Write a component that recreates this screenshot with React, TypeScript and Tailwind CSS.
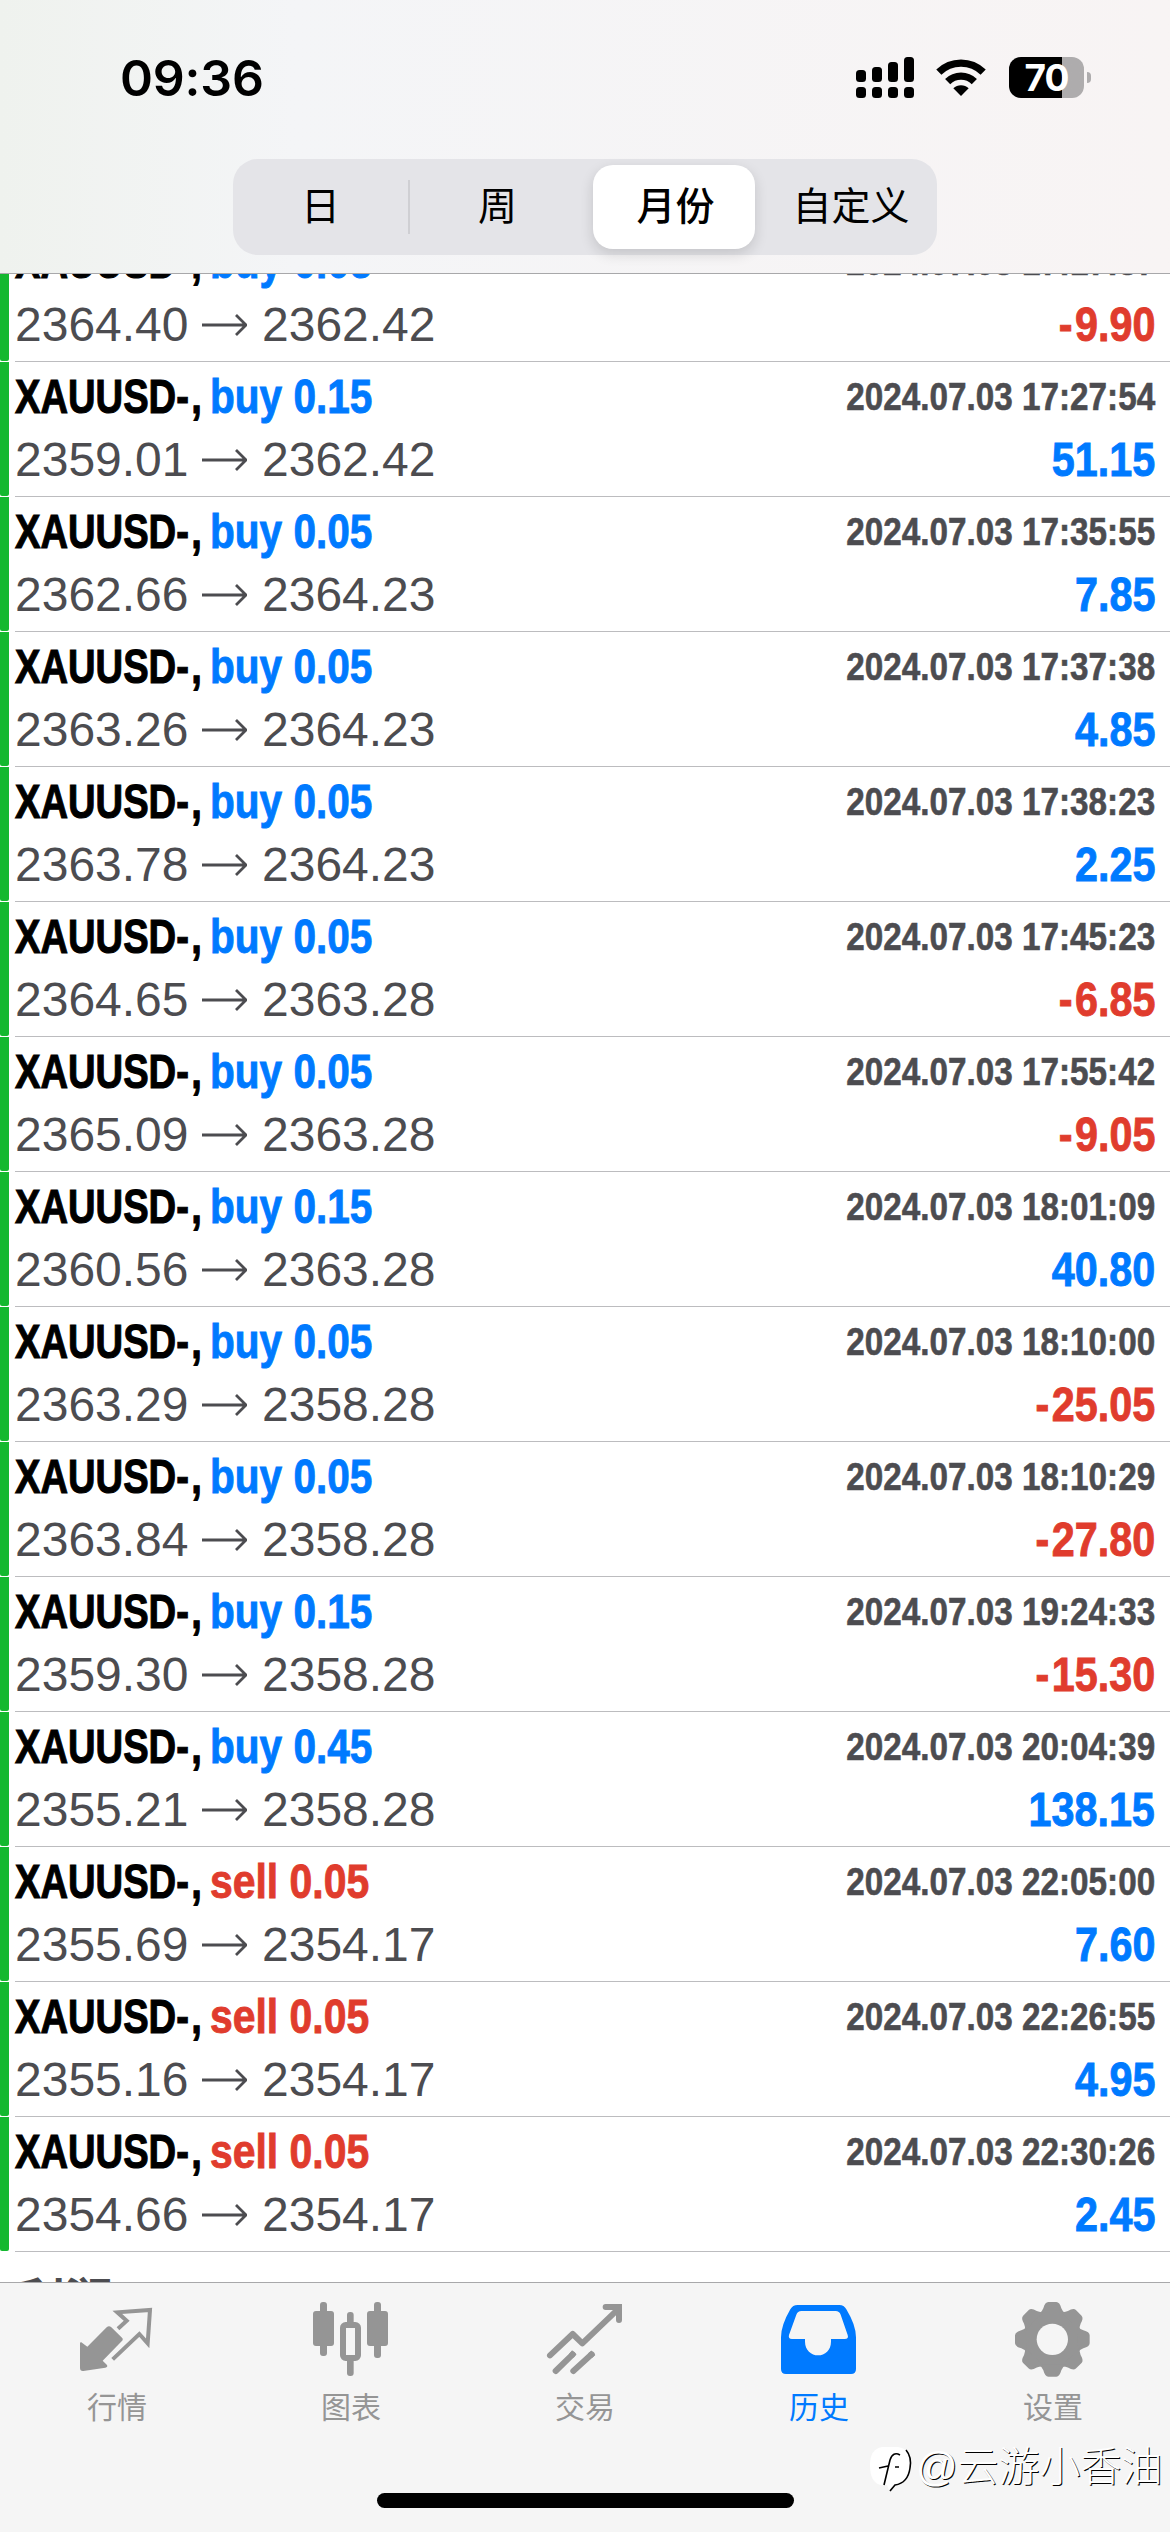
import type { ReactNode } from "react";

type Deal = {
  side: "buy" | "sell";
  volume: string;
  open: string;
  close: string;
  time: string;
  profit: string;
};

const deals: Deal[] = [
  { side: "buy", volume: "0.05", open: "2364.40", close: "2362.42", time: "17:17:37", profit: "-9.90" },
  { side: "buy", volume: "0.15", open: "2359.01", close: "2362.42", time: "17:27:54", profit: "51.15" },
  { side: "buy", volume: "0.05", open: "2362.66", close: "2364.23", time: "17:35:55", profit: "7.85" },
  { side: "buy", volume: "0.05", open: "2363.26", close: "2364.23", time: "17:37:38", profit: "4.85" },
  { side: "buy", volume: "0.05", open: "2363.78", close: "2364.23", time: "17:38:23", profit: "2.25" },
  { side: "buy", volume: "0.05", open: "2364.65", close: "2363.28", time: "17:45:23", profit: "-6.85" },
  { side: "buy", volume: "0.05", open: "2365.09", close: "2363.28", time: "17:55:42", profit: "-9.05" },
  { side: "buy", volume: "0.15", open: "2360.56", close: "2363.28", time: "18:01:09", profit: "40.80" },
  { side: "buy", volume: "0.05", open: "2363.29", close: "2358.28", time: "18:10:00", profit: "-25.05" },
  { side: "buy", volume: "0.05", open: "2363.84", close: "2358.28", time: "18:10:29", profit: "-27.80" },
  { side: "buy", volume: "0.15", open: "2359.30", close: "2358.28", time: "19:24:33", profit: "-15.30" },
  { side: "buy", volume: "0.45", open: "2355.21", close: "2358.28", time: "20:04:39", profit: "138.15" },
  { side: "sell", volume: "0.05", open: "2355.69", close: "2354.17", time: "22:05:00", profit: "7.60" },
  { side: "sell", volume: "0.05", open: "2355.16", close: "2354.17", time: "22:26:55", profit: "4.95" },
  { side: "sell", volume: "0.05", open: "2354.66", close: "2354.17", time: "22:30:26", profit: "2.45" },
];

function StatusBar() {
  return (
    <div className="flex h-[159px] items-start justify-between pl-[120px] pr-[79px]">
      <div className="mt-[48px] font-[Inter] text-[50px] leading-[60px] font-semibold tracking-[-0.2px] text-black">09:36</div>
      <div className="mt-[57px] flex items-start">
        <svg className="h-[41px] w-[58px]" viewBox="0 0 58 41">
          <rect x="0" y="13" width="10" height="12" rx="3.5" />
          <rect x="16" y="10" width="10" height="15" rx="3.5" />
          <rect x="32" y="5" width="10" height="20" rx="3.5" />
          <rect x="48" y="0" width="10" height="25" rx="3.5" />
          <rect x="0" y="30" width="10" height="11" rx="3.5" />
          <rect x="16" y="30" width="10" height="11" rx="3.5" />
          <rect x="32" y="30" width="10" height="11" rx="3.5" />
          <rect x="48" y="30" width="10" height="11" rx="3.5" />
        </svg>
        <svg className="mt-[1px] ml-[21px] h-[40px] w-[52px]" viewBox="286 54 156 120">
          <path d="M297.500 96.500A95 95 0 0 1 430.500 96.500" fill="none" stroke="#000" strokeWidth="22" />
          <path d="M324 125A57 57 0 0 1 404 125" fill="none" stroke="#000" strokeWidth="22" />
          <path d="M364 168L341 145A33 33 0 0 1 387 145Z" />
        </svg>
        <div className="ml-[22px] flex items-center">
          <div className="flex h-[41px] w-[75px] items-center justify-center rounded-[12px] bg-linear-to-r from-black from-[71%] to-[#aeacad] to-[71%] font-[Inter] text-[37px] leading-[41px] font-bold tracking-[-1px] text-white">
            70
          </div>
          <div className="ml-[3px] h-[11px] w-[4px] rounded-r-full bg-[#aeacad]" />
        </div>
      </div>
    </div>
  );
}

function Segments() {
  return (
    <div className="ml-[233px] flex h-[96px] w-[704px] items-center rounded-[25px] bg-[#e4e4e8] text-[39px] leading-[84px] text-black">
      <div className="w-[175px] text-center">日</div>
      <div className="h-[54px] w-[2px] bg-[#cfcfd3]" />
      <div className="w-[183px] pr-[8px] text-center">周</div>
      <div className="h-[84px] w-[162px] rounded-[20px] bg-white pl-[3px] text-center font-medium shadow-[0_5px_14px_rgba(0,0,0,0.14)]">月份</div>
      <div className="flex-1 pl-[10px] text-center">自定义</div>
    </div>
  );
}

function Arrow() {
  return (
    <svg className="ml-[14px] mr-[15px] h-[24px] w-[45px]" viewBox="0 0 45 24" fill="none" stroke="#4c4c50" strokeWidth="2.8">
      <path d="M0 12H44M34 2L44 12L34 22" />
    </svg>
  );
}

function DealRow({ deal }: { deal: Deal }) {
  const sideColor = deal.side === "buy" ? "text-[#007aff]" : "text-[#e03c2d]";
  const sideScale =
    deal.side === "buy"
      ? "inline-block origin-left scale-x-[0.845] [-webkit-text-stroke:0.9px_currentColor]"
      : "inline-block origin-left scale-x-[0.852] [-webkit-text-stroke:0.9px_currentColor]";
  const loss = deal.profit.startsWith("-");
  return (
    <div className="flex h-[135px] shrink-0">
      <div className="h-[134px] w-[9px] rounded-b-[2px] bg-[#14b82f]" />
      <div className="ml-[6px] flex flex-1 justify-between border-b border-[#bcbcbf] pt-[11px] pr-[15px] text-[48px] leading-[48px] whitespace-nowrap">
        <div>
          <div className="flex h-[48px] font-bold">
            <div className="w-[195px] text-black">
              <span className="inline-block origin-left scale-x-[0.795] [-webkit-text-stroke:1.1px_currentColor]">
                XAUUSD<span className="mr-[3px]">-</span>,
              </span>
            </div>
            <div className={sideColor}>
              <span className={sideScale}>
                {deal.side} {deal.volume}
              </span>
            </div>
          </div>
          <div className="mt-[15px] flex items-center text-[#4c4c50]">
            <span className="w-[173px]">{deal.open}</span>
            <Arrow />
            <span>{deal.close}</span>
          </div>
        </div>
        <div className="flex flex-col items-end font-bold">
          <div className="origin-right scale-x-[0.853] text-[39px] text-[#4c4c50] [-webkit-text-stroke:0.6px_currentColor]">2024.07.03 {deal.time}</div>
          <div className={loss ? "text-[#e03c2d]" : "text-[#007aff]"}>
            <div className="mt-[15px] origin-right scale-x-[0.86] [-webkit-text-stroke:0.9px_currentColor]">
              {loss ? (
                <>
                  <span className="mr-[3px]">-</span>
                  {deal.profit.slice(1)}
                </>
              ) : (
                deal.profit
              )}
            </div>
          </div>
        </div>
      </div>
    </div>
  );
}

function Tab({ label, active, children }: { label: string; active?: boolean; children: ReactNode }) {
  return (
    <div className={active ? "flex w-[234px] flex-col items-center text-[#007aff]" : "flex w-[234px] flex-col items-center text-[#959595]"}>
      <div className="mt-[13px]">{children}</div>
      <div className="mt-[7px] text-[30px] leading-[42px]">{label}</div>
    </div>
  );
}

function TabBar() {
  const box = "h-[84px] w-[96px]";
  return (
    <div className="flex h-[250px] flex-col border-t border-[#a8a8aa] bg-[#f5f5f5]">
      <div className="flex">
        <Tab label="行情">
          <svg className={box} viewBox="207 288 288 252" fill="currentColor">
            <path d="M244 427L262 440L320 382Q327 375 334 382L366 413Q371 418 365 424L308 482L321 495Q324 501 316 503L250 513Q240 514 240 504V430Q240 426 244 427Z" />
            <path d="M354 386L380 362L352 337L450 330L443 430L418 402L338 478" fill="none" stroke="currentColor" strokeWidth="12" />
          </svg>
        </Tab>
        <Tab label="图表">
          <svg className={box} viewBox="909 288 288 252" fill="currentColor">
            <rect x="960" y="306" width="21" height="162" rx="9" />
            <rect x="939" y="333" width="63" height="105" rx="9" />
            <rect x="1122" y="306" width="21" height="168" rx="9" />
            <rect x="1101" y="333" width="63" height="105" rx="9" />
            <rect x="1041" y="336" width="20" height="45" rx="9" />
            <rect x="1041" y="465" width="20" height="63" rx="9" />
            <rect x="1029" y="375" width="45" height="99" rx="8" fill="none" stroke="currentColor" strokeWidth="18" />
          </svg>
        </Tab>
        <Tab label="交易">
          <svg className={box} viewBox="261 288 288 252" fill="none" stroke="currentColor" strokeWidth="18" strokeLinecap="round">
            <path d="M300 466L368 402L397 430L506 326" strokeLinejoin="round" />
            <path d="M467 321H507V360" />
            <path d="M317 513L368 463M370 513L425 463" />
            <path d="M364 467L373 457M420 467L430 458" strokeLinecap="butt" />
          </svg>
        </Tab>
        <Tab label="历史" active>
          <svg className={box} viewBox="963 288 288 252" fill="currentColor">
            <path
              fillRule="evenodd"
              d="M1043 315H1168Q1182 315 1189 328Q1218 376 1218 412V507Q1218 522 1203 522H1008Q993 522 993 507V412Q993 376 1021 328Q1028 315 1043 315ZM1054 333Q1043 333 1039 344L1017 405Q1014 417 1026 417H1065V425C1065 450 1084 466 1104 466C1125 466 1143 450 1143 425V417H1184Q1197 417 1193 405L1172 344Q1168 333 1157 333Z"
            />
          </svg>
        </Tab>
        <Tab label="设置">
          <svg className={box} viewBox="-142 -130 288 252">
            <g fill="currentColor">
              <circle r="86" />
              {[0, 45, 90, 135, 180, 225, 270, 315].map((angle) => (
                <path
                  key={angle}
                  transform={`rotate(${angle})`}
                  d="M-40 -76Q-31 -82 -27 -93Q-22 -112 -12 -112H12Q22 -112 27 -93Q31 -82 40 -76Z"
                />
              ))}
            </g>
            <circle r="47" fill="#f5f5f5" />
          </svg>
        </Tab>
      </div>
      <div className="mt-auto mb-[24px] h-[15px] w-[417px] self-center rounded-full bg-black" />
    </div>
  );
}

function Watermark() {
  return (
    <div className="absolute top-[2441px] left-[870px] flex items-center text-[41px] leading-[46px] font-light whitespace-nowrap text-white">
      <svg className="mt-[4px] h-[48px] w-[44px]" viewBox="0 0 44 48" fill="none">
        <path d="M12 2H28Q41 4 41 19Q41 36 28 40H24L19 45L17 40H11Q0 38 0 20Q0 4 12 2Z" fill="#fff" />
        <path d="M36 5Q42 12 40 23Q38 38 25 40L20 46" stroke="#000" strokeWidth="1.6" />
        <path d="M30 10Q23 6 20 15L14 40M9 23L18 21M25 22H29" stroke="#000" strokeWidth="1.6" />
      </svg>
      <span className="ml-[2px] [text-shadow:1px_1px_0_#000]">@云游小香油</span>
    </div>
  );
}

export default function App() {
  return (
    <div className="relative flex h-[2532px] w-[1170px] flex-col overflow-hidden bg-white font-['Liberation_Sans','Noto_Sans_CJK_SC',sans-serif]">
      <div className="h-[274px] shrink-0 border-b border-[#a8a8aa] bg-linear-to-r from-[#eff2ee] via-[#f4f5f7] via-25% to-[#f8f4f4]">
        <StatusBar />
        <Segments />
      </div>
      <div className="flex h-[2008px] shrink-0 flex-col overflow-hidden">
        <div className="-mt-[47px]">
          {deals.map((deal) => (
            <DealRow key={deal.time} deal={deal} />
          ))}
          <div className="pt-[15px] pl-[17px] text-[48px] leading-[70px] font-bold text-[#4c4c50]">利润:</div>
        </div>
      </div>
      <TabBar />
      <Watermark />
    </div>
  );
}
